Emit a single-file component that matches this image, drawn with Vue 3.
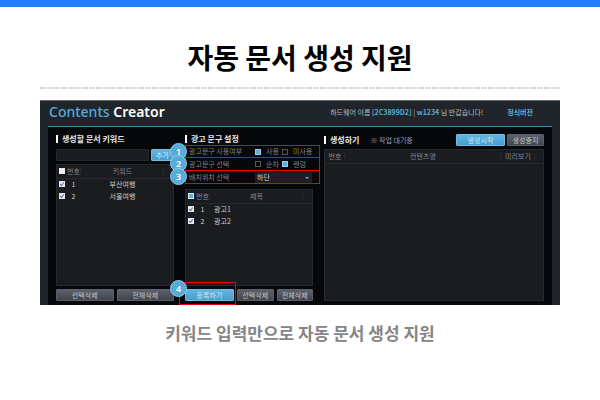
<template>
    <div class="page">
        <h1 class="page-title">자동 문서 생성 지원</h1>
        <div class="dashes"></div>

        <div class="app">
            <header class="app-header">
                <div class="logo"><span>Contents</span> Creator</div>
                <p class="welcome">
                    하드웨어 이름 <b>[2C3899D2]</b> | <b>w1234</b> 님 반갑습니다!
                </p>
                <b class="version">정식버전</b>
            </header>

            <div class="app-body">
                <section class="col">
                    <h2 class="col-title">생성할 문서 키워드</h2>
                    <div class="add-row">
                        <input v-model="keyword" type="text" aria-label="키워드" />
                        <button class="btn btn-blue" @click="addKeyword">추가</button>
                    </div>
                    <div class="list">
                        <table>
                            <thead>
                                <tr>
                                    <th class="c-check"><input type="checkbox" class="box white" aria-label="키워드 전체" /></th>
                                    <th class="c-no">번호</th>
                                    <th>키워드</th>
                                    <th class="c-end"></th>
                                </tr>
                            </thead>
                            <tbody>
                                <tr v-for="(item, i) in keywords" :key="item.name">
                                    <td><input v-model="item.checked" type="checkbox" class="box tick" :aria-label="item.name" /></td>
                                    <td>{{ i + 1 }}</td>
                                    <td>{{ item.name }}</td>
                                    <td></td>
                                </tr>
                            </tbody>
                        </table>
                    </div>
                    <div class="actions">
                        <button class="btn">선택삭제</button>
                        <button class="btn">전체삭제</button>
                    </div>
                </section>

                <section class="col">
                    <h2 class="col-title">광고 문구 설정</h2>
                    <div class="settings">
                        <div class="setting">
                            <span class="badge">1</span>
                            <span class="setting-name">광고문구 사용여부</span>
                            <label><input v-model="useAd" type="radio" name="use" value="y" class="box fill" />사용</label>
                            <label><input v-model="useAd" type="radio" name="use" value="n" class="box fill" />미사용</label>
                        </div>
                        <div class="setting">
                            <span class="badge">2</span>
                            <span class="setting-name">광고문구 선택</span>
                            <label><input v-model="order" type="radio" name="order" value="seq" class="box fill" />순차</label>
                            <label><input v-model="order" type="radio" name="order" value="rand" class="box fill" />랜덤</label>
                        </div>
                        <div class="setting">
                            <span class="badge">3</span>
                            <label class="setting-name" for="position">배치위치 선택</label>
                            <div class="select">
                                <select id="position" v-model="position">
                                    <option>상단</option>
                                    <option>하단</option>
                                </select>
                                <svg viewBox="0 0 4 2"><path d="M0 0h4L2 2z" fill="#5bb4e0" /></svg>
                            </div>
                        </div>
                    </div>
                    <div class="list">
                        <table>
                            <thead>
                                <tr>
                                    <th class="c-check"><input type="checkbox" class="box fill bright" checked aria-label="광고 전체" /></th>
                                    <th class="c-no">번호</th>
                                    <th>제목</th>
                                    <th class="c-end"></th>
                                </tr>
                            </thead>
                            <tbody>
                                <tr v-for="(item, i) in ads" :key="item.name">
                                    <td><input v-model="item.checked" type="checkbox" class="box tick" :aria-label="item.name" /></td>
                                    <td>{{ i + 1 }}</td>
                                    <td class="left">{{ item.name }}</td>
                                    <td></td>
                                </tr>
                            </tbody>
                        </table>
                    </div>
                    <div class="actions ad-actions">
                        <button class="btn btn-blue">등록하기</button>
                        <button class="btn">선택삭제</button>
                        <button class="btn">전체삭제</button>
                        <div class="marker"><span class="badge">4</span></div>
                    </div>
                </section>

                <section class="col">
                    <div class="run-head">
                        <h2 class="col-title">생성하기</h2>
                        <span class="status">※ 작업 대기중</span>
                        <button class="btn btn-blue start">생성시작</button>
                        <button class="btn stop">생성중지</button>
                    </div>
                    <div class="list">
                        <table>
                            <thead>
                                <tr>
                                    <th class="c-num">번호</th>
                                    <th>컨텐츠명</th>
                                    <th class="c-view">미리보기</th>
                                    <th class="c-last"></th>
                                </tr>
                            </thead>
                        </table>
                    </div>
                </section>
            </div>
        </div>

        <p class="caption">키워드 입력만으로 자동 문서 생성 지원</p>
    </div>
</template>

<script setup>
import { ref } from 'vue';

const keyword = ref('');
const useAd = ref('y');
const order = ref('rand');
const position = ref('하단');

const keywords = ref([
    { name: '부산여행', checked: true },
    { name: '서울여행', checked: true },
]);

const ads = ref([
    { name: '광고1', checked: true },
    { name: '광고2', checked: true },
]);

const addKeyword = () => {
    const name = keyword.value.trim();
    if (!name) return;
    keywords.value.push({ name, checked: true });
    keyword.value = '';
};
</script>

<style>
body {
    background-color: #fff;
}
</style>

<style scoped>
* {
    box-sizing: border-box;
}

.page {
    border-top: 7px solid #247fff;
    padding: 0 40px;
    font-family: "Noto Sans CJK KR", sans-serif;
}

.page-title {
    margin: 30px 0 0;
    font-size: 28px;
    line-height: 40px;
    font-weight: bold;
    text-align: center;
    color: #000;
}

.dashes {
    height: 2px;
    margin: 10px 0 11px;
    background: repeating-linear-gradient(90deg, #dcdcdc 0 6px, #fff 6px 7px);
}

.app {
    border-top: 1px solid #60666c;
    padding: 0 8px;
    background-color: #20252b;
    color: #9498a0;
    font-size: 7px;
    line-height: 12px;
}

.app-header {
    height: 25px;
    display: flex;
    align-items: center;
    padding: 0 19px 4px 1px;
}

.logo {
    flex: 1;
    font-family: "Noto Sans", sans-serif;
    font-size: 14px;
    font-weight: 600;
    line-height: 20px;
    color: #fff;
}

.logo span {
    font-weight: 500;
    color: #55acd9;
}

.welcome {
    margin: 0 24px 0 0;
    color: #b5b9bd;
}

.welcome b,
.version {
    color: #59acd3;
}

.app-body {
    display: grid;
    grid-template-columns: 118fr 128fr 220fr;
    gap: 11px;
    padding: 6px 8px 4px;
    min-height: 179px;
    border-top: 1px solid #418bb4;
    background-color: #07080c;
}

.col {
    min-width: 0;
    display: flex;
    flex-direction: column;
}

.col-title {
    margin: 0;
    display: flex;
    align-items: center;
    gap: 4px;
    height: 12px;
    font-size: 8px;
    line-height: 12px;
    font-weight: bold;
    color: #e8e8ea;
    white-space: nowrap;
}

.col-title::before {
    content: "";
    width: 2px;
    height: 8px;
    background-color: #fff;
}

.btn {
    height: 12px;
    padding: 0;
    border: 1px solid #5b6069;
    border-radius: 1px;
    background: linear-gradient(#5b606a, #41454e);
    color: #c3c6cc;
    font-family: inherit;
    font-size: 7px;
    line-height: 8px;
    cursor: pointer;
}

.btn-blue {
    border-color: #70bce2;
    background: linear-gradient(#62b5e0, #4b9dcc);
    color: #c5e8f8;
}

.add-row {
    display: flex;
    gap: 2px;
    margin: 4px 0 3px;
}

.add-row input {
    flex: 1;
    min-width: 0;
    height: 12px;
    padding: 0 3px;
    border: 1px solid #26272d;
    background-color: #1b1c21;
    color: #ddd;
    font-size: 7px;
    outline: none;
}

.add-row .btn {
    width: 23px;
}

.list {
    flex: 1;
    border: 1px solid #26282c;
    background-color: #1b1c1f;
}

table {
    width: 100%;
    table-layout: fixed;
    border-collapse: collapse;
}

th,
td {
    height: 12px;
    padding: 0;
    font-weight: normal;
    line-height: 10px;
    text-align: center;
    white-space: nowrap;
}

th {
    height: 13px;
    color: #80859a;
    border-bottom: 1px solid #26282e;
    background: linear-gradient(#292a31, #292a31) right center / 1px 6px no-repeat;
}

th:first-child:not(.c-num),
th:last-child {
    background: none;
}

td {
    color: #cfcdbf;
}

.c-check {
    width: 9px;
}

.c-no {
    width: 15px;
}

.c-end {
    width: 9px;
}

.c-num {
    width: 20px;
}

.c-view {
    width: 34px;
}

.c-last {
    width: 8px;
}

.left {
    padding-left: 4px;
    text-align: left;
}

.box {
    appearance: none;
    display: block;
    width: 6px;
    height: 6px;
    margin: 0 0 0 2px;
    border: 1px solid #55565b;
    background-color: transparent;
}

.white {
    border-color: #eee;
    background-color: #eee;
}

.fill:checked {
    background-color: #58b4e4;
    border-color: #9ecfe6;
}

.bright:checked {
    border-color: #e2eef4;
}

.tick {
    border-color: #e6e7ec;
    background-color: #e6e7ec;
}

.tick:checked::before {
    content: "";
    display: block;
    height: 4px;
    background-color: #33489a;
    clip-path: polygon(0 40%, 35% 70%, 90% 0, 100% 15%, 40% 100%, 0 65%);
}

.actions {
    position: relative;
    display: flex;
    gap: 3px;
    margin-top: 3px;
}

.actions .btn {
    flex: 1;
}

.ad-actions .btn-blue {
    flex: none;
    width: 49px;
}

.settings {
    margin: 0 -7px 5px 0;
    color: #7d808b;
}

.setting {
    position: relative;
    display: flex;
    align-items: center;
    height: 13px;
    padding-left: 3px;
    border: 1px solid #f00000;
}

.setting + .setting {
    border-top: none;
}

.setting-name {
    width: 66px;
    line-height: 11px;
    white-space: nowrap;
}

.setting label:not(.setting-name) {
    display: flex;
    align-items: center;
    gap: 5px;
    width: 27px;
    line-height: 11px;
    white-space: nowrap;
}

.setting .box {
    flex: none;
    margin: 0;
}

.select {
    position: relative;
    flex: 1;
    margin-right: 7px;
}

.select select {
    appearance: none;
    display: block;
    width: 100%;
    height: 11px;
    padding: 0 2px;
    border: none;
    background-color: #1d1f24;
    color: #d0d1d4;
    font-family: inherit;
    font-size: 7px;
    line-height: 11px;
}

.select svg {
    position: absolute;
    right: 3px;
    top: 5px;
    width: 4px;
    height: 2px;
}

.badge {
    position: absolute;
    left: -16px;
    top: -3px;
    width: 17px;
    height: 17px;
    border: 1px solid #8ecbed;
    border-radius: 50%;
    background-color: #56abd9;
    color: #fff;
    font-family: "Noto Sans", sans-serif;
    font-size: 9px;
    font-weight: 600;
    line-height: 15px;
    text-align: center;
}

/* red outline around the register button */
.marker {
    position: absolute;
    left: -6px;
    top: -7px;
    width: 57px;
    height: 23px;
    border: 1px solid #f00000;
    pointer-events: none;
}

.marker .badge {
    left: -10px;
}

.run-head {
    display: flex;
    align-items: center;
    gap: 2px;
    height: 14px;
    margin-bottom: 2px;
}

.status {
    flex: 1;
    padding-left: 9px;
    color: #9a9eae;
    white-space: nowrap;
}

.start {
    width: 49px;
}

.stop {
    width: 37px;
}

.caption {
    margin: 15px 0 0;
    font-size: 17px;
    line-height: 25px;
    font-weight: bold;
    text-align: center;
    color: #858585;
}
</style>
